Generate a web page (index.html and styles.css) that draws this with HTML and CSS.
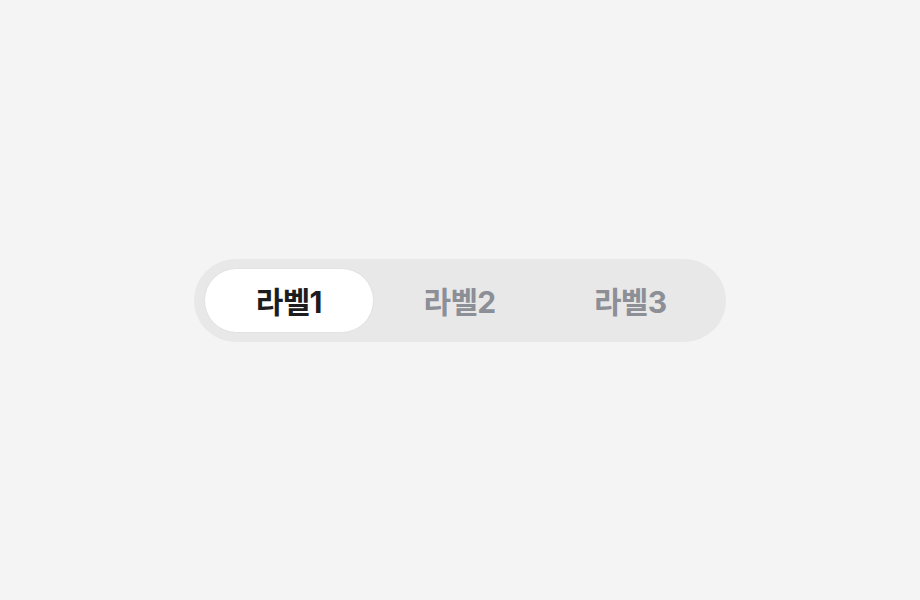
FILE: index.html
```html
<!DOCTYPE html>
<html lang="ko">
<head>
  <meta charset="UTF-8">
  <meta name="viewport" content="width=device-width, initial-scale=1">
  <title>Segmented Tabs</title>
  <link rel="stylesheet" href="styles.css">
</head>
<body>

  <div class="segmented">
    <button class="segment active">라벨1</button>
    <button class="segment">라벨2</button>
    <button class="segment">라벨3</button>
  </div>

</body>
</html>
```

FILE: styles.css
```css
body {
  margin: 0;
  height: 600px;
  background: #f4f4f4;
  font-family: Inter, "Noto Sans CJK KR", sans-serif;
  display: flex;
  align-items: center;
  justify-content: center;
}
.segmented {
  display: flex;
  width: 512px;
  padding: 9px 10px;
  background: #e8e8e8;
  border-radius: 42px;
  margin-left: -1px;
}
.segment {
  flex: 1;
  height: 65px;
  border: 1px solid transparent;
  border-radius: 33px;
  background: transparent;
  font-family: inherit;
  font-size: 30px;
  font-weight: 700;
  letter-spacing: -0.7px;
  color: #8c8f96;
  cursor: pointer;
}
.segment.active {
  background: #fff;
  border-color: #e2e2e2;
  color: #1d1d1f;
}
```
